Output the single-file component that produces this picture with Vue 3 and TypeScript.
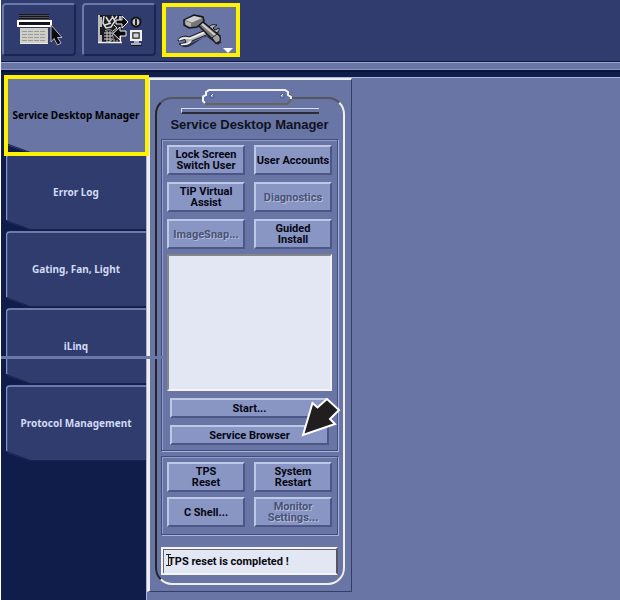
<script setup lang="ts">
import { ref } from 'vue'

interface PanelAction {
  label: string
  disabled?: boolean
}

const tabs: string[] = [
  'Service Desktop Manager',
  'Error Log',
  'Gating, Fan, Light',
  'iLinq',
  'Protocol Management',
]
const activeTab = ref<string>(tabs[0])

const mainActions: PanelAction[] = [
  { label: 'Lock Screen\nSwitch User' },
  { label: 'User Accounts' },
  { label: 'TiP Virtual\nAssist' },
  { label: 'Diagnostics', disabled: true },
  { label: 'ImageSnap...', disabled: true },
  { label: 'Guided\nInstall' },
]
const wideActions: PanelAction[] = [{ label: 'Start...' }, { label: 'Service Browser' }]
const systemActions: PanelAction[] = [
  { label: 'TPS\nReset' },
  { label: 'System\nRestart' },
  { label: 'C Shell...' },
  { label: 'Monitor\nSettings...', disabled: true },
]

const output = ref<string>('')
const status = ref<string>('TPS reset is completed !')
</script>

<template>
  <div class="app">
    <header class="toolbar">
      <button class="tool" type="button" aria-label="Worklist">
        <svg width="48" height="34" viewBox="0 0 48 34">
          <path d="M4 1H34V7H4Z" fill="#4c4f5c" />
          <path d="M4 1.500H34M4 3.500H34M4 5.500H34" stroke="#15151c" />
          <path d="M5 15H33V31H5Z" fill="#cfcfca" />
          <path d="M7 18.500H31M7 21.500H31M7 24.500H31M7 27.500H31" stroke="#9a9a97" stroke-dasharray="5 1" />
          <path d="M5 30.500H33" stroke="#e9e9e4" />
          <path d="M3 8H36V13H3Z" fill="#141419" stroke="#fff" stroke-width="2" />
          <path d="M36 12V29L39 25.500L42.500 32L46 30L42.500 24.500H47Z" fill="#0b0b0f" stroke="#b8b8bc" />
        </svg>
      </button>
      <button class="tool" type="button" aria-label="Image transfer">
        <svg width="48" height="34" viewBox="0 0 48 34">
          <rect x="3" y="2" width="24" height="28" fill="#1b1b20" />
          <path d="M4 2V30M6 4V14M25 3V7M25.500 23V30M6 22V29M3 29.500H27" stroke="#efefef" stroke-width="1.500" />
          <path d="M9 3L8 10L11 15L16 14L20 8L17 3M11 4L14 9L18 4M10 12L16 10M22 3L20 6" stroke="#dcdcdc" fill="none" stroke-width="1.500" />
          <path d="M10 18C15 15 20 18 17 22C20 25 17 29 11 29M12 18V29M15 18V29M19 26V29M22 27V29" stroke="#bdbdbd" fill="none" />
          <path d="M9 20H17M9 23H17M9 26H17M19 12L22 15L18 18" stroke="#dedede" fill="none" />
          <path d="M21 7H27V3L33 9L27 15V11H21Z" fill="#0b0b0f" stroke="#f5f5f5" />
          <path d="M31 18H25V14L18 20.500L25 27V23H31Z" fill="#0b0b0f" stroke="#f5f5f5" />
          <circle cx="41" cy="9" r="4.500" fill="#c9c9c9" stroke="#111116" stroke-width="2" />
          <path d="M41 6V12" stroke="#222" stroke-width="2" />
          <rect x="36" y="18" width="10" height="9" fill="#777" stroke="#f0f0f0" stroke-width="2" />
          <path d="M38 20H44V25H38Z" fill="#d5d5d5" stroke="#333" />
          <path d="M39 29H44M36 31H46" stroke="#d5d5d5" stroke-width="1.500" />
          <path d="M36 32.500H47" stroke="#101014" />
        </svg>
      </button>
      <button class="tool tool-active" type="button" aria-label="Service tools">
        <svg width="70" height="46" viewBox="0 0 70 46">
          <path d="M14 37Q20 41 27 35L47 27L53 24L50 33L56 35L52 38L40 29L26 38Q20 42 15 39Z" fill="#2b3048" />
          <path d="M12 34C12 30 18 28 23 30L42 22C43 18 47 17 51 18L47 21L49 23L53 21C54 25 50 27 45 26L26 34C25 38 17 40 13 37L20 35.500L19 32.500Z" fill="#b4b4b4" stroke="#191a20" />
          <path d="M13 33Q18 30 24 31.500L43 23.500M15 37.500Q22 38 25 34" stroke="#f0f0f0" fill="none" stroke-width="1.500" />
          <path d="M32 18L36 14L54 29L54 34L50 36L46 32Z" fill="#777" stroke="#15151a" stroke-width="1.500" />
          <path d="M35 16L50 29" stroke="#d0d0d0" stroke-width="2" />
          <path d="M46 31L51 27L54 30L54 34L50 36Z" fill="#a2a2a2" stroke="#222" />
          <path d="M18 13L28 8L37 10L38 14L31 20L23 21L18 18Z" fill="#777" stroke="#15151a" stroke-width="1.500" />
          <path d="M19 13L28 9L36 11L26 15.500Z" fill="#cfcfcf" />
          <path d="M19 14L25 16V20L20 18Z" fill="#b5b5b5" />
        </svg>
        <span class="menu-mark"></span>
      </button>
    </header>
    <div class="rail"></div>

    <main class="workspace">
      <nav class="tabs">
        <button
          v-for="tab in tabs"
          :key="tab"
          type="button"
          class="tab"
          :class="{ 'tab-active': tab === activeTab }"
          @click="activeTab = tab"
        >
          <svg class="tab-shape" viewBox="0 0 139 76" preserveAspectRatio="none">
            <path class="tab-fill" d="M0 4Q0 0 4 0H139V76H24L4 69Q0 68 0 64Z" />
            <path class="tab-light" d="M0.500 66V4Q0.500 1 4 1H139" />
            <path class="tab-dark" d="M1 67L24 75.500H139" />
          </svg>
          <span class="tab-text">{{ tab }}</span>
        </button>
      </nav>

      <section class="desk">
        <div class="clipboard">
          <svg class="clip" width="92" height="18" viewBox="0 0 92 18">
            <path d="M8 2H84L87 5V8Q91 9 90 13L86 16H6L2 13Q1 9 5 8V5Z" fill="#6673a8" />
            <path d="M87 6Q91 8 90 12L86 16H6L3 14" fill="none" stroke="#65625f" stroke-width="2" />
            <path d="M4 15L2 13V9Q2 8 5 7V4L8 2H84L87 4V7L90 9V11" fill="none" stroke="#f2f2f2" stroke-width="2" />
            <circle cx="11" cy="8" r="2" fill="#8f9cca" stroke="#4c5582" />
            <circle cx="81" cy="8" r="2" fill="#8f9cca" stroke="#4c5582" />
            <path d="M10 8L12 6M80 8L82 6" stroke="#eef" />
          </svg>
          <div class="slot"></div>
          <h1 class="title">Service Desktop Manager</h1>

          <div class="group">
            <div class="pairs">
              <button v-for="a in mainActions" :key="a.label" type="button" class="key" :disabled="a.disabled">
                {{ a.label }}
              </button>
            </div>
            <textarea v-model="output" class="output" aria-label="Output"></textarea>
            <div class="wides">
              <button v-for="a in wideActions" :key="a.label" type="button" class="key key-wide">
                {{ a.label }}
              </button>
            </div>
            <svg class="pointer" width="40" height="40" viewBox="0 0 40 40">
              <path d="M2 38L11.500 6L16.500 10.500L26 2L38 13L29 22L34 27Z" fill="#211e20" stroke="#fff" stroke-width="2" />
            </svg>
          </div>

          <div class="group group-system">
            <div class="pairs pairs-system">
              <button v-for="a in systemActions" :key="a.label" type="button" class="key" :disabled="a.disabled">
                {{ a.label }}
              </button>
            </div>
          </div>

          <div class="status">
            <svg class="caret" width="5" height="12" viewBox="0 0 5 12">
              <path d="M0 0.500H5M0 11.500H5M2.500 0V12" stroke="#222" />
            </svg>
            <input v-model="status" class="status-input" type="text" aria-label="Status" />
          </div>
        </div>
      </section>

      <section class="canvas"></section>
      <div class="guide"></div>
    </main>
  </div>
</template>

<style>
body {
  background: #2f3c6d;
}
</style>

<style scoped>
.app {
  display: flex;
  flex-direction: column;
  min-height: 100vh;
  box-sizing: border-box;
  border-left: 1px solid #fff;
  background: #101c49;
  font-family: "Liberation Sans", Arial, sans-serif;
}
button,
input,
textarea {
  margin: 0;
  padding: 0;
  border-radius: 0;
  box-sizing: border-box;
  font-family: inherit;
}
.toolbar {
  display: flex;
  gap: 6px;
  height: 61px;
  padding: 3px 1px 0;
  box-sizing: border-box;
  background: #2f3c6d;
}
.tool {
  position: relative;
  display: flex;
  align-items: center;
  justify-content: center;
  width: 74px;
  height: 53px;
  background: #2f3c6d;
  border: 2px solid;
  border-color: #6a78ab #1a2550 #1a2550 #6a78ab;
  border-radius: 4px;
}
.tool-active {
  width: 78px;
  height: 54px;
  background: #6875a5;
  border: 4px solid #fff200;
  border-radius: 0;
}
.menu-mark {
  position: absolute;
  right: 3px;
  bottom: 0;
  border: 5px solid transparent;
  border-top-color: #fff;
  border-bottom: 0;
}
.rail {
  height: 11px;
  box-sizing: border-box;
  background: #6875a5;
  border-top: 1px solid #0d1740;
  border-bottom: 2px solid #0a1238;
  box-shadow: inset 0 1px #9aa6d0, inset 0 -1px #8793c0;
}
.workspace {
  position: relative;
  flex: 1;
  display: grid;
  grid-template-columns: 145px 206px 1fr;
  padding-top: 5px;
}
.tabs {
  display: flex;
  flex-direction: column;
  gap: 1px;
  padding-left: 5px;
}
.tab {
  position: relative;
  height: 76px;
  border: 0;
  background: none;
  color: #d3daf4;
  font: bold 10px/14px "Noto Sans", sans-serif;
  white-space: nowrap;
}
.tab-shape {
  position: absolute;
  inset: 0;
  width: 100%;
  height: 100%;
}
.tab-fill {
  fill: #2f3c6d;
}
.tab-light {
  fill: none;
  stroke: #8290c0;
  stroke-width: 1.5;
}
.tab-dark {
  fill: none;
  stroke: #17224f;
}
.tab-text {
  position: relative;
}
.tab-active {
  color: #000;
}
.tab-active .tab-fill {
  fill: #6875a5;
}
.tab-active::after {
  content: "";
  position: absolute;
  inset: -2px -3px -3px -2px;
  border: 4px solid #fff200;
  z-index: 1;
}
.desk {
  background: #6875a5;
  border-left: 1px solid #aab6df;
  border-top: 1px solid #aab6df;
  box-sizing: border-box;
  padding-bottom: 8px;
}
.clipboard {
  position: relative;
  display: flex;
  flex-direction: column;
  align-items: stretch;
  height: 100%;
  padding: 28px 17px 0 15px;
  box-sizing: border-box;
  border-left: 3px solid #efeeea;
  border-top: 2px solid #efeeea;
  border-right: 1px solid #343e66;
  border-bottom: 1px solid #343e66;
  background: #6875a5;
}
.clipboard::before {
  content: "";
  position: absolute;
  inset: 17px 6px 6px 5px;
  border: 2px solid;
  border-color: #55565e #efeeea #efeeea #262629;
  border-radius: 17px;
}
.clip {
  position: absolute;
  top: 8px;
  left: 51px;
}
.slot {
  position: relative;
  align-self: center;
  width: 138px;
  height: 6px;
  box-sizing: border-box;
  border-top: 1px solid #d6dcf1;
  border-left: 1px solid #d6dcf1;
  border-bottom: 2px solid #2a2c38;
}
.title {
  position: relative;
  margin: 2px -6px 5px;
  text-align: center;
  white-space: nowrap;
  color: #10131f;
  font-size: 13px;
  line-height: 18px;
  font-weight: bold;
}
.group {
  position: relative;
  margin: 0 -4px;
  padding: 5px;
  border: 1px solid #414d7c;
  box-shadow: inset 1px 1px #929dca, 1px 1px #aab4d8;
}
.group-system {
  margin-top: 5px;
  padding-bottom: 7px;
}
.pairs {
  display: grid;
  grid-template-columns: 1fr 1fr;
  gap: 7px 9px;
}
.pairs-system {
  gap: 5px 9px;
}
.key {
  height: 30px;
  background: #8995c3;
  border: 2px solid;
  border-color: #bdc7e6 #4c5787 #4c5787 #bdc7e6;
  color: #050712;
  font: bold 11px/11px Roboto, "Liberation Sans", sans-serif;
  white-space: pre-line;
}
.key:disabled {
  color: #4a5275;
  text-shadow: 1px 1px #b4bedf;
}
.output {
  display: block;
  width: 100%;
  height: 137px;
  margin-top: 5px;
  background: #e3e6f3;
  border: 2px solid;
  border-color: #85858c #f4f4f6 #f4f4f6 #85858c;
  resize: none;
}
.wides {
  display: grid;
  gap: 7px;
  margin-top: 7px;
  padding: 0 3px;
}
.key-wide {
  height: 20px;
}
.pointer {
  position: absolute;
  right: -4px;
  bottom: 13px;
}
.status {
  position: relative;
  margin: 12px -4px 0;
}
.status-input {
  display: block;
  width: 100%;
  height: 28px;
  padding-left: 5px;
  background: #e3e6f3;
  border: 2px solid;
  border-color: #f4f4f6 #55565e #f4f4f6 #f4f4f6;
  box-shadow: inset 1px 1px #66676f;
  color: #08090f;
  font: bold 11px/14px Roboto, "Liberation Sans", sans-serif;
}
.caret {
  position: absolute;
  left: 5px;
  top: 7px;
}
.canvas {
  background: #6875a5;
  border-top: 1px solid #aab6df;
}
.guide {
  position: absolute;
  top: 284px;
  left: 0;
  width: 162px;
  height: 3px;
  background: #6a78aa;
}
</style>
